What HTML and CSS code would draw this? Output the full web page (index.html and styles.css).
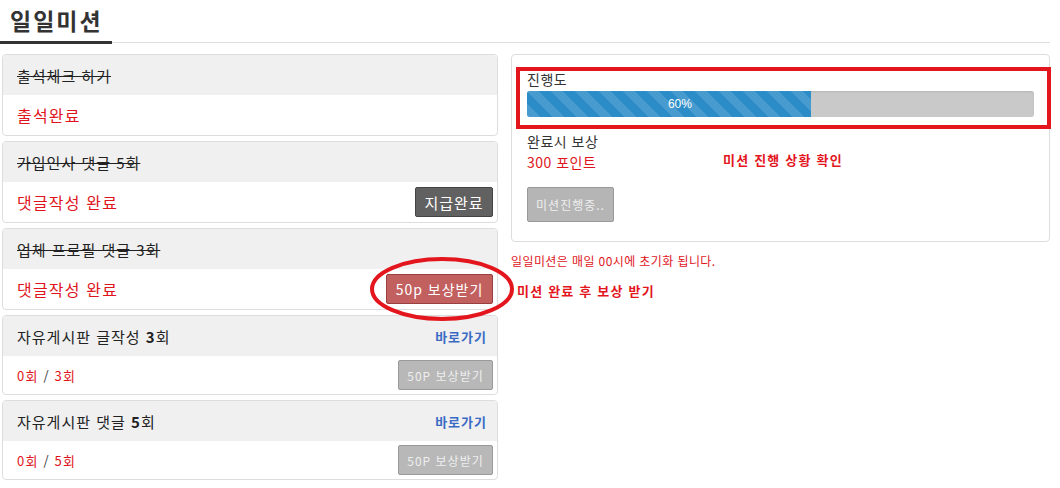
FILE: index.html
```html
<!DOCTYPE html>
<html lang="ko">
<head>
<meta charset="utf-8">
<title>일일미션</title>
<link rel="stylesheet" href="styles.css">
</head>
<body>
<div class="page">
  <div class="tabs">
    <div class="tab">일일미션</div>
  </div>
  <div class="content">
    <div class="missions">
      <div class="card">
        <div class="card-head"><span class="done-title">출석체크 하기</span></div>
        <div class="card-body"><span class="status">출석완료</span></div>
      </div>
      <div class="card">
        <div class="card-head"><span class="done-title">가입인사 댓글 5회</span></div>
        <div class="card-body"><span class="status">댓글작성 완료</span><button class="btn btn-paid">지급완료</button></div>
      </div>
      <div class="card">
        <div class="card-head"><span class="done-title">업체 프로필 댓글 3회</span></div>
        <div class="card-body"><span class="status">댓글작성 완료</span><button class="btn btn-reward">50p 보상받기</button></div>
      </div>
      <div class="card card-open">
        <div class="card-head"><span class="open-title">자유게시판 글작성 <b>3</b>회</span><a class="go" href="#">바로가기</a></div>
        <div class="card-body"><span class="count"><i>0회</i> / <i>3회</i></span><button class="btn btn-off">50P 보상받기</button></div>
      </div>
      <div class="card card-open">
        <div class="card-head"><span class="open-title">자유게시판 댓글 <b>5</b>회</span><a class="go" href="#">바로가기</a></div>
        <div class="card-body"><span class="count"><i>0회</i> / <i>5회</i></span><button class="btn btn-off">50P 보상받기</button></div>
      </div>
      <svg class="ellipse" width="150" height="68" viewBox="0 0 150 68"><ellipse cx="75" cy="34" rx="70" ry="30" fill="none" stroke="#e3161e" stroke-width="4"/></svg>
    </div>
    <div class="side">
      <div class="panel">
        <div class="label">진행도</div>
        <div class="progress"><div class="bar" style="width:56%">60%</div></div>
        <div class="label reward-label">완료시 보상</div>
        <div class="points">300 포인트</div>
        <button class="btn btn-progress">미션진행중..</button>
        <div class="mark-box"></div>
        <div class="note-check">미션 진행 상황 확인</div>
      </div>
      <p class="reset-note">일일미션은 매일 00시에 초기화 됩니다.</p>
      <p class="note-reward">미션 완료 후 보상 받기</p>
    </div>
  </div>
</div>
</body>
</html>
```
FILE: styles.css
```css
* { box-sizing: border-box; }
body {
  margin: 0;
  background: #fff;
  font-family: "Noto Sans CJK KR", "Noto Sans", sans-serif;
  color: #333;
}
.page { width: 1060px; height: 488px; overflow: hidden; }
.tabs {
  display: flex;
  border-bottom: 1px solid #ddd;
  margin-right: 10px;
  height: 43px;
}
.tab {
  width: 112px;
  padding: 2px 0 0 10px;
  font-size: 23px;
  font-weight: 700;
  letter-spacing: 2px;
  line-height: 36px;
  color: #333;
  border-bottom: 3px solid #333;
  margin-bottom: -2px;
}
.content {
  display: flex;
  gap: 13px;
  padding: 11px 10px 0 2px;
}
.missions {
  position: relative;
  width: 496px;
  display: flex;
  flex-direction: column;
  gap: 5px;
}
.card {
  border: 1px solid #ddd;
  border-radius: 4px;
  overflow: hidden;
  background: #fff;
}
.card-head {
  height: 40px;
  background: #f0f0f0;
  display: flex;
  align-items: center;
  justify-content: space-between;
  padding: 0 10px 0 14px;
  font-size: 15px;
  letter-spacing: 1px;
  color: #222;
}
.done-title { text-decoration: line-through; text-decoration-thickness: 1px; }
.open-title b { font-weight: 700; }
.card-body {
  height: 40px;
  display: flex;
  align-items: center;
  justify-content: space-between;
  padding: 0 4px 0 14px;
}
.card-open .card-body { height: 38px; }
.status { color: #e0141c; font-size: 16px; letter-spacing: 1.2px; }
.count { font-size: 13px; color: #333; letter-spacing: 1.2px; }
.count i { font-style: normal; color: #e0141c; }
.go { color: #3a6bc4; font-size: 13px; font-weight: 700; letter-spacing: 1px; text-decoration: none; }
.btn {
  font-family: "Noto Sans CJK KR", "Noto Sans", sans-serif;
  border-radius: 2px;
  cursor: pointer;
  letter-spacing: 1px;
  padding: 0;
}
.btn-paid {
  width: 78px; height: 30px;
  background: #616161; border: 1px solid #444; color: #fff; font-size: 15px;
}
.btn-reward {
  width: 107px; height: 30px;
  background: #c26060; border: 1px solid #9a4040; color: #fff; font-size: 14px;
}
.btn-off {
  width: 95px; height: 30px;
  background: #b8b8b8; border: 1px solid #999; color: #eee; font-size: 12px;
}
.ellipse { position: absolute; left: 365px; top: 201px; }
.side { width: 539px; }
.panel {
  position: relative;
  border: 1px solid #ddd;
  border-radius: 4px;
  padding: 13px 15px 20px;
  height: 188px;
}
.label { font-size: 14px; line-height: 22px; color: #333; letter-spacing: 0.5px; }
.progress {
  height: 26px;
  margin: 1px 0 0;
  background: #c9c9c9;
  border-radius: 3px;
  overflow: hidden;
  box-shadow: inset 0 1px 2px rgba(0,0,0,.1);
}
.bar {
  height: 100%;
  padding-left: 22px;
  background-color: #2c8cc8;
  background-image: linear-gradient(45deg, rgba(255,255,255,.13) 25%, transparent 25%, transparent 50%, rgba(255,255,255,.13) 50%, rgba(255,255,255,.13) 75%, transparent 75%, transparent);
  background-size: 24px 24px;
  color: #fff;
  font-family: "Liberation Sans", Arial, sans-serif;
  font-size: 12px;
  line-height: 26px;
  text-align: center;
}
.reward-label { margin-top: 13px; }
.points { color: #e0141c; font-size: 14px; line-height: 20px; letter-spacing: 0.5px; }
.btn-progress {
  margin-top: 15px;
  width: 87px; height: 35px;
  background: #b5b5b5; border: 1px solid #999; color: #eee; font-size: 12px;
}
.mark-box {
  position: absolute;
  left: 4px; top: 12px; right: -2px;
  height: 62px;
  border: 4px solid #e3161e;
}
.note-check {
  position: absolute;
  left: 211px; top: 95px;
  color: #e3161e; font-size: 13px; font-weight: 700; letter-spacing: 1.2px;
}
.reset-note {
  margin: 11px 0 0;
  color: #e0141c;
  font-size: 12px;
  letter-spacing: 0.4px;
  line-height: 16px;
}
.note-reward {
  margin: 12px 0 0 6px;
  color: #e3161e;
  font-size: 13px;
  font-weight: 700;
  letter-spacing: 1.2px;
}
```
